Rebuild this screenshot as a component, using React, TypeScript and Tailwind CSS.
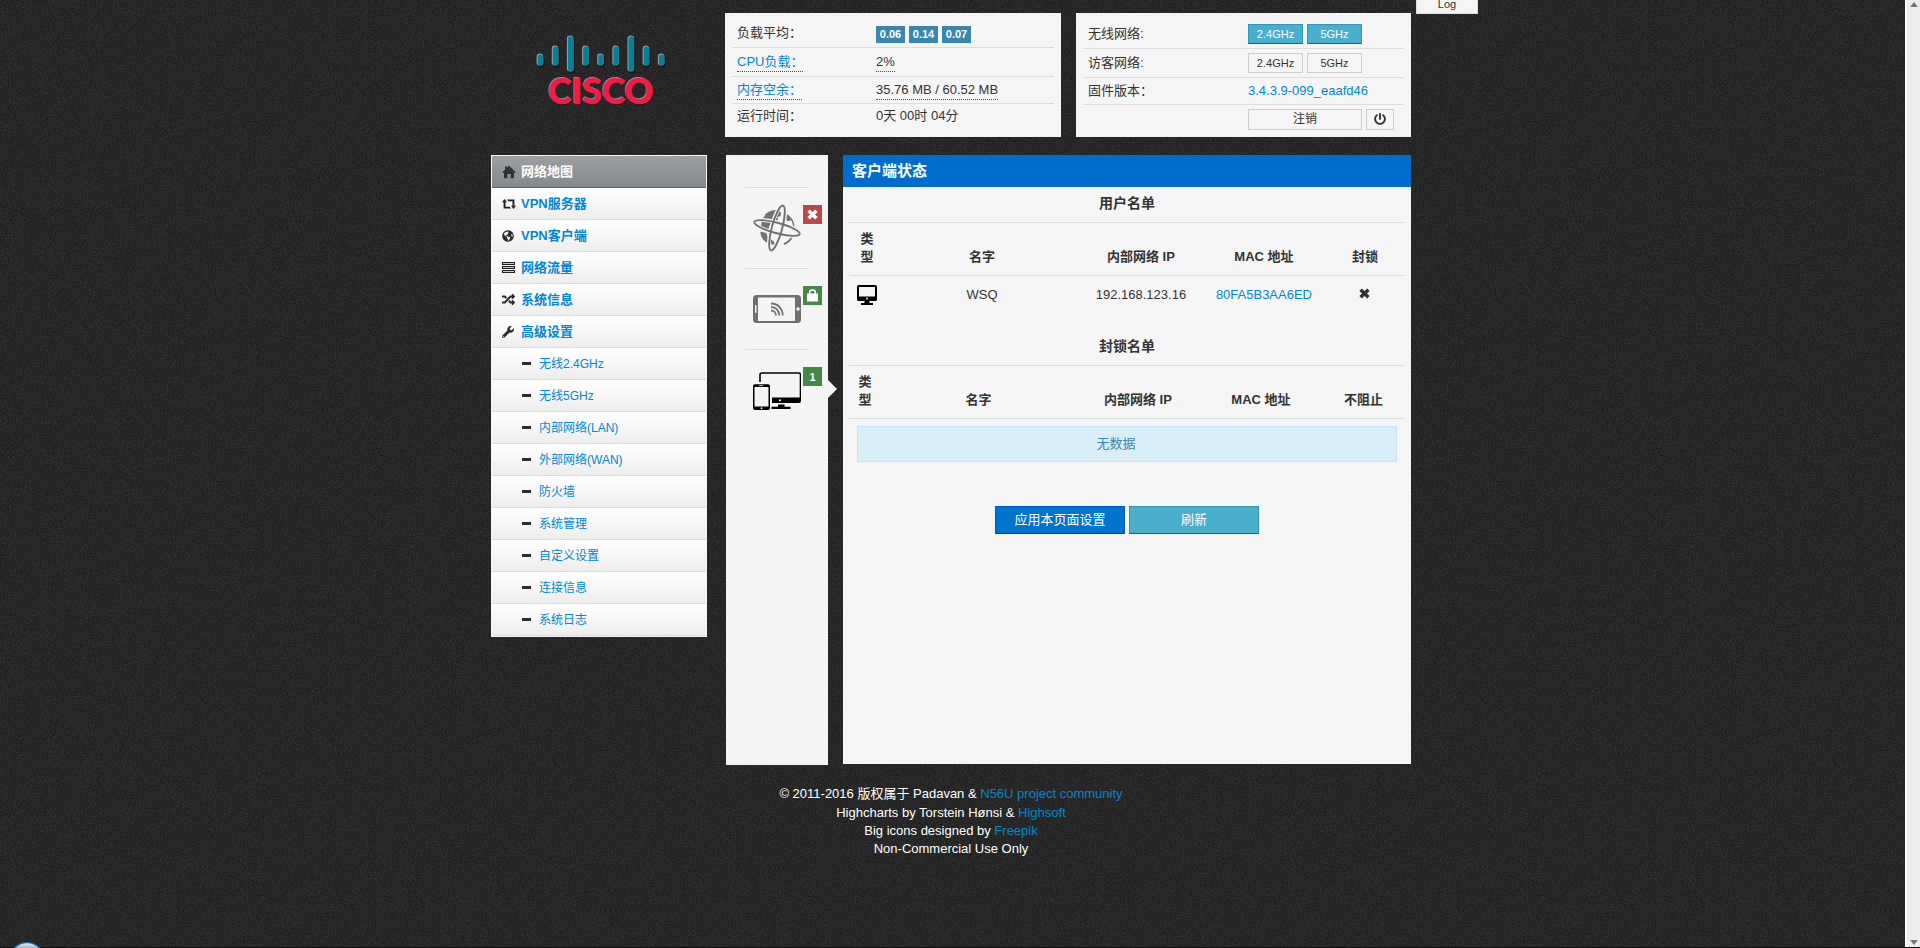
import type { ReactNode } from 'react';
import { FaGlobeAmericas, FaPowerOff, FaRandom, FaWrench } from 'react-icons/fa';

const FONT = "font-['Liberation_Sans','Noto_Sans_CJK_SC',sans-serif]";

function Grain() {
  return (
    <svg className="pointer-events-none absolute inset-0 h-full w-full" aria-hidden="true">
      <filter id="grain" x="0" y="0" width="100%" height="100%" colorInterpolationFilters="sRGB">
        <feTurbulence type="fractalNoise" baseFrequency="0.6" numOctaves="2" seed="4" stitchTiles="stitch" />
        <feColorMatrix values="0.12 0 0 0 0.093  0.12 0 0 0 0.093  0.12 0 0 0 0.093  0 0 0 0 1" />
      </filter>
      <rect width="100%" height="100%" filter="url(#grain)" />
    </svg>
  );
}

const bars = [
  [54, 65],
  [46, 65],
  [36, 71],
  [46, 65],
  [54, 65],
  [46, 65],
  [36, 71],
  [46, 65],
  [54, 65],
];

function Logo() {
  return (
    <svg className="block h-[110px] w-[216px]" viewBox="0 13 216 110" role="img" aria-label="Cisco">
      {bars.map(([top, bottom], i) => (
        <g key={i}>
          <rect x={47 + i * 15.15} y={top + 1} width="6.4" height={bottom - top + 1.4} rx="3.2" fill="#101010" />
          <rect x={45.6 + i * 15.15} y={top - 0.5} width="6.6" height={bottom - top + 1} rx="3.2" fill="#999" />
          <rect x={46.7 + i * 15.15} y={top + 0.6} width="5.6" height={bottom - top} rx="2.8" fill="#05809b" />
        </g>
      ))}
      <g className="font-['Lato',sans-serif] font-black" fontSize="35.5" textAnchor="middle">
        <text x="111" y="105" fill="#101010">CISCO</text>
        <text x="109" y="103" fill="#a0989a">CISCO</text>
        <text x="110" y="104" fill="#ee1c46" stroke="#ee1c46" strokeWidth="0.6">CISCO</text>
      </g>
    </svg>
  );
}

function InfoRow({ label, first, height, children }: { label: ReactNode; first?: boolean; height: string; children: ReactNode }) {
  return (
    <div className={`flex items-center ${height} ${first ? '' : 'border-t border-[#ddd]'}`}>
      <dt className="w-[144px] shrink-0 pl-[5px]">{label}</dt>
      <dd className="flex items-center gap-1">{children}</dd>
    </div>
  );
}

const dotted = 'border-b border-dotted border-[#0b5f94]';

function LoadPanel() {
  return (
    <dl className="ml-[18px] w-[336px] bg-[#f5f5f5] px-[7px] pt-[5px]">
      <InfoRow first height="h-[29px]" label="负载平均：">
        {['0.06', '0.14', '0.07'].map((v) => (
          <span key={v} className="mt-1 w-[29px] bg-[#3a87ad] text-center text-[11px] leading-[17px] font-bold text-white">
            {v}
          </span>
        ))}
      </InfoRow>
      <InfoRow height="h-[29px]" label={<a href="#cpu" className={`inline-block text-[#0088cc] ${dotted}`}>CPU负载：</a>}>
        <span className={dotted}>2%</span>
      </InfoRow>
      <InfoRow height="h-[27px]" label={<a href="#mem" className={`inline-block text-[#0088cc] ${dotted}`}>内存空余：</a>}>
        <span className={dotted}>35.76 MB / 60.52 MB</span>
      </InfoRow>
      <InfoRow height="h-[25px]" label="运行时间：">0天 00时 04分</InfoRow>
    </dl>
  );
}

const teal = 'border-[#2f96b4] border-b-[#1f6377] bg-[#49afcd] text-white';
const plain = 'border-[#ccc] bg-[#f5f5f5] text-[#333]';

function BandButtons({ on }: { on?: boolean }) {
  return (
    <>
      {['2.4GHz', '5GHz'].map((b) => (
        <button key={b} type="button" className={`h-5 w-[55px] border text-[11px] leading-4 ${on ? teal : plain}`}>
          {b}
        </button>
      ))}
    </>
  );
}

function WirelessPanel() {
  return (
    <dl className="ml-[15px] w-[335px] bg-[#f5f5f5] px-[7px] pt-[6px]">
      <InfoRow first height="h-[29px]" label="无线网络:">
        <div className="ml-[21px] flex gap-1"><BandButtons on /></div>
      </InfoRow>
      <InfoRow height="h-[29px]" label="访客网络:">
        <div className="ml-[21px] flex gap-1"><BandButtons /></div>
      </InfoRow>
      <InfoRow height="h-[27px]" label="固件版本：">
        <a href="#firmware" className="ml-[21px] text-[#0088cc]">3.4.3.9-099_eaafd46</a>
      </InfoRow>
      <InfoRow height="h-[29px]" label="">
        <button type="button" className={`ml-[21px] h-[21px] w-[114px] border text-[12px] leading-4 ${plain}`}>注销</button>
        <button type="button" aria-label="重启" className={`flex h-[21px] w-7 items-center justify-center border ${plain}`}>
          <FaPowerOff size={12} />
        </button>
      </InfoRow>
    </dl>
  );
}

function HomeIcon() {
  return (
    <svg width="14" height="14" viewBox="0 0 14 14" fill="#333">
      <path d="M7 0.4 13.6 7.2 12.9 8H12v5.3H8.7V9H5.4v4.3H2V8H1.1L0.4 7.2 3 4.6V1.6h1.8v1.2z" />
    </svg>
  );
}

function RetweetIcon() {
  return (
    <svg width="14" height="10" viewBox="0 0 14 10" fill="#222">
      <path d="M2.5 0 5 3.2H3.500v4.600h4.200L9 9.500H1.600V3.200H0z" />
      <path d="M11.500 10 9 6.800h1.500V2.200H6.300L5 .5h7.400v6.300H14z" />
    </svg>
  );
}

function TasksIcon() {
  return (
    <svg width="13" height="12" viewBox="0 0 13 12">
      <g fill="#ccc" stroke="#222" strokeWidth="1">
        <rect x="0.5" y="0.5" width="12" height="2" />
        <rect x="0.5" y="4.5" width="12" height="2" />
        <rect x="0.5" y="8.5" width="12" height="2" />
      </g>
    </svg>
  );
}

const menu: { name: string; icon: ReactNode }[] = [
  { name: '网络地图', icon: <HomeIcon /> },
  { name: 'VPN服务器', icon: <RetweetIcon /> },
  { name: 'VPN客户端', icon: <FaGlobeAmericas size={12} /> },
  { name: '网络流量', icon: <TasksIcon /> },
  { name: '系统信息', icon: <FaRandom size={13} /> },
  { name: '高级设置', icon: <FaWrench size={12} /> },
];

const submenu = ['无线2.4GHz', '无线5GHz', '内部网络(LAN)', '外部网络(WAN)', '防火墙', '系统管理', '自定义设置', '连接信息', '系统日志'];

function Sidebar() {
  return (
    <nav className="w-[216px] self-start border border-[#f5f5f5]">
      <ul>
        {menu.map((m, i) => (
          <li key={m.name}>
            <a
              href="#menu"
              className={`flex h-8 items-center border-b pl-[10px] text-[13px] font-bold ${
                i === 0
                  ? 'border-[#5f6163] bg-linear-to-b from-[#9d9fa3] to-[#868a8c] text-white'
                  : 'border-[#ddd] bg-linear-to-b from-white to-[#ededed] text-[#0088cc]'
              }`}
            >
              <span className="flex w-[19px] items-center text-[#2c2c2c]">{m.icon}</span>
              {m.name}
            </a>
          </li>
        ))}
        {submenu.map((s) => (
          <li key={s}>
            <a href="#submenu" className="flex h-8 items-center border-b border-[#ddd] bg-linear-to-b from-white to-[#ededed] pl-[30px] text-[12px] text-[#0088cc]">
              <span className="mr-2 h-[3px] w-[9px] bg-[#2c2c2c]" />
              {s}
            </a>
          </li>
        ))}
      </ul>
    </nav>
  );
}

function GlobeArt() {
  return (
    <svg width="48" height="48" viewBox="0 0 48 48" fill="none" stroke="#707070">
      <path d="M12 11.500A17 17 0 0 1 27 7.200M33 10.200C38.500 13.500 41 19 41 25" strokeWidth="1.400" />
      <path d="M40 31C38.500 35 35 38.500 31 40.200" strokeWidth="2" />
      <path fill="#707070" stroke="none" d="M9 16C12 10 18 6.500 25 7l3 1.500-.5 3.500-3 1 .5 3-4 1.500-1 3-3.500 1-1 3.500-4-.5L8 23z" />
      <path fill="#707070" stroke="none" d="M7.300 27.500l6 1.500 1.500 4 6 4.500 1 3C13 40.500 7.500 34.500 7.300 27.500z" />
      <path fill="#707070" stroke="none" d="M32 10.500l4 1.800 2 4.200-3.500.5-2.500-2z" />
      <ellipse cx="24" cy="24" rx="23.500" ry="5.600" transform="rotate(15 24 24)" stroke="#f4f4f4" strokeWidth="4" />
      <ellipse cx="24" cy="24" rx="5.600" ry="23.500" transform="rotate(15 24 24)" stroke="#f4f4f4" strokeWidth="4" />
      <ellipse cx="24" cy="24" rx="23.500" ry="5.200" transform="rotate(15 24 24)" strokeWidth="1.900" />
      <ellipse cx="24" cy="24" rx="5.200" ry="23.200" transform="rotate(15 24 24)" strokeWidth="1.900" />
    </svg>
  );
}

function PhoneArt() {
  return (
    <svg width="48" height="48" viewBox="0 0 48 48">
      <rect y="10" width="48" height="28" rx="3.500" fill="#707070" />
      <rect x="5" y="12.500" width="37" height="23.500" fill="#f4f4f4" />
      <rect x="2" y="20" width="1.500" height="8" rx=".7" fill="#f4f4f4" />
      <circle cx="45" cy="24" r="1.700" fill="#f4f4f4" />
      <path d="M18 25.500c2.800 0 5 2.200 5 5M18 22c4.800 0 8.300 3.700 8.300 8.500M18 18.500c6.800 0 11.700 5.200 11.700 12" fill="none" stroke="#707070" strokeWidth="1.800" />
    </svg>
  );
}

function DevicesArt() {
  return (
    <svg width="48" height="48" viewBox="0 0 48 48">
      <path d="M7 16V9q0-2 2-2H45.500q2 0 2 2V33" fill="none" stroke="#000" strokeWidth="1.600" />
      <path d="M19 31.500H48V35q0 2-2 2H19zM25 38.500h6.500v2.300H37.500V43H18.500v-2.200H25z" fill="#000" />
      <circle cx="27" cy="34.200" r="1" fill="#fff" />
      <path fillRule="evenodd" d="M2 18.200h13q2 0 2 2V42q0 2-2 2H2q-2 0-2-2V20.200q0-2 2-2zM1.500 21v19.500h14V21z" fill="#000" />
      <path d="M6 19.600h4" stroke="#fff" strokeWidth=".8" />
      <circle cx="8.500" cy="42.200" r=".9" fill="#fff" />
    </svg>
  );
}

function CrossGlyph({ color }: { color: string }) {
  return (
    <svg width="11" height="11" viewBox="0 0 11 11" fill="none">
      <path d="M1.600 1.800 9.400 9.200M9.400 1.800 1.600 9.200" stroke={color} strokeWidth="3.500" />
    </svg>
  );
}

function LockGlyph() {
  return (
    <svg width="11" height="13" viewBox="0 0 11 13">
      <path d="M2.700 6V3.300Q2.700 1 5.500 1T8.300 3.300V6" fill="none" stroke="#fff" strokeWidth="1.600" />
      <rect y="4.500" width="11" height="8" fill="#fff" />
    </svg>
  );
}

const tabs: { label: string; art: ReactNode; badge: ReactNode; color: string }[] = [
  { label: '互联网', art: <GlobeArt />, badge: <CrossGlyph color="#fff" />, color: 'bg-[#b94a48]' },
  { label: '无线', art: <PhoneArt />, badge: <LockGlyph />, color: 'bg-[#468847]' },
  { label: '客户端', art: <DevicesArt />, badge: '1', color: 'bg-[#468847]' },
];

function TabStrip() {
  return (
    <div className="ml-[19px] min-h-[610px] w-[102px] bg-[#f4f4f4] pt-8">
      {tabs.map((t, i) => (
        <div key={t.label} className="relative h-[81px]">
          <hr className="mx-[19px] border-[#ddd]" />
          <button type="button" aria-label={t.label} className="mt-4 ml-[27px] block">
            {t.art}
          </button>
          <span className={`absolute top-[18px] right-[6px] flex h-[19px] w-[19px] items-center justify-center text-[11px] font-bold text-white ${t.color}`}>
            {t.badge}
          </span>
          {i === 2 && (
            <svg className="absolute top-[31px] -right-[9px]" width="9" height="18" viewBox="0 0 9 18">
              <path d="M0 0 9 9 0 18z" fill="#f4f4f4" />
            </svg>
          )}
        </div>
      ))}
    </div>
  );
}

function MonitorIcon() {
  return (
    <svg className="mx-auto" width="20" height="20" viewBox="0 0 20 20">
      <path fillRule="evenodd" d="M1.500 0h17Q20 0 20 1.500v13Q20 16 18.500 16H12.500v2H16v2H4v-2h3.500v-2H1.500Q0 16 0 14.500v-13Q0 0 1.500 0zM2 2v9.500h16V2z" fill="#000" />
      <circle cx="10" cy="13.500" r=".9" fill="#fff" />
    </svg>
  );
}

type ClientTableProps = { title: string; last: string; firstCol: string; lastCol: string; children?: ReactNode };

function ClientTable({ title, last, firstCol, lastCol, children }: ClientTableProps) {
  const head = 'border-y border-[#ddd] pb-[9px] align-bottom font-bold';
  return (
    <table className="w-full table-fixed border-separate border-spacing-0 text-center leading-[18px]">
      <colgroup>
        <col className={firstCol} />
        <col />
        <col className="w-[124px]" />
        <col className="w-[122px]" />
        <col className={lastCol} />
      </colgroup>
      <thead>
        <tr>
          <th colSpan={5} className="h-[35px] pb-1 text-[14px] font-bold">{title}</th>
        </tr>
        <tr className="h-[54px]">
          <th className={`${head} px-2`}>类型</th>
          <th className={head}>名字</th>
          <th className={head}>内部网络 IP</th>
          <th className={head}>MAC 地址</th>
          <th className={head}>{last}</th>
        </tr>
      </thead>
      {children}
    </table>
  );
}

function ClientStatus() {
  return (
    <main className="ml-[15px] min-h-[609px] flex-1 self-start bg-[#f5f5f5] pb-6">
      <h1 className="h-8 bg-[#006dcc] pl-[9px] text-[15px] leading-8 font-bold text-white">客户端状态</h1>
      <div className="px-[6px]">
        <ClientTable title="用户名单" last="封锁" firstCol="w-[36px]" lastCol="w-[80px]">
          <tbody>
            <tr className="h-[37px]">
              <td><MonitorIcon /></td>
              <td>WSQ</td>
              <td>192.168.123.16</td>
              <td><a href="#client" className="text-[#0088cc]">80FA5B3AA6ED</a></td>
              <td>
                <button type="button" aria-label="封锁" className="mb-1 align-middle">
                  <CrossGlyph color="#333" />
                </button>
              </td>
            </tr>
          </tbody>
        </ClientTable>
        <div className="mt-[17px]">
          <ClientTable title="封锁名单" last="不阻止" firstCol="w-[32px]" lastCol="w-[83px]" />
        </div>
        <p className="mx-2 mt-[7px] h-9 border border-[#bce8f1] bg-[#d9edf7] pr-[22px] text-center leading-[34px] text-[#3a87ad]">无数据</p>
        <div className="mt-11 flex justify-center gap-1">
          <button type="button" className="h-7 w-[130px] border border-[#0055cc] border-b-[#003b80] bg-[#0074cc] text-white">应用本页面设置</button>
          <button type="button" className={`h-7 w-[130px] border ${teal}`}>刷新</button>
        </div>
      </div>
    </main>
  );
}

function Footer() {
  const link = 'text-[#0088cc]';
  return (
    <footer className="mt-[19px] text-center leading-[18px] text-white">
      <p className="leading-5">© 2011-2016 版权属于 Padavan &amp; <a href="#project" className={link}>N56U project community</a></p>
      <p>Highcharts by Torstein Hønsi &amp; <a href="#highsoft" className={link}>Highsoft</a></p>
      <p>Big icons designed by <a href="#freepik" className={link}>Freepik</a></p>
      <p>Non-Commercial Use Only</p>
    </footer>
  );
}

export default function App() {
  return (
    <div className={`relative flex min-h-screen overflow-hidden bg-[#272727] text-[13px] leading-[18px] text-[#333] ${FONT}`}>
      <Grain />
      <div className="relative flex-1 pr-[3px]">
        <div className="relative mx-auto w-[920px] pt-[13px]">
          <button type="button" className="absolute top-0 left-[925px] h-[14px] w-[62px] border border-t-0 border-[#ddd] bg-[#f5f5f5] pb-1 text-[11px] leading-[9px]">
            Log
          </button>
          <header className="flex h-[124px]">
            <Logo />
            <LoadPanel />
            <WirelessPanel />
          </header>
          <div className="mt-[18px] flex">
            <Sidebar />
            <TabStrip />
            <ClientStatus />
          </div>
          <Footer />
        </div>
      </div>
      <div className="relative flex w-[15px] flex-col items-center justify-between border-l-2 border-white bg-[#ededed] pt-[2px] pb-[3px]">
        <svg width="8" height="5" viewBox="0 0 8 5"><path d="M4 0 8 5H0z" fill="#777" /></svg>
        <svg width="8" height="5" viewBox="0 0 8 5"><path d="M4 5 8 0H0z" fill="#777" /></svg>
      </div>
      <div className="absolute inset-x-0 bottom-0 h-px bg-[#0c0e12]" />
      <svg className="absolute bottom-0 left-[13px]" width="28" height="6" viewBox="0 0 28 6">
        <linearGradient id="orb" x1="0" y1="0" x2="0" y2="1">
          <stop offset="0" stopColor="#e8f0f5" />
          <stop offset="1" stopColor="#9cb4c5" />
        </linearGradient>
        <path d="M1 6.500Q6 .7 14 .7T27 6.500" fill="url(#orb)" stroke="#1c6ba3" strokeWidth="1.200" />
      </svg>
    </div>
  );
}
